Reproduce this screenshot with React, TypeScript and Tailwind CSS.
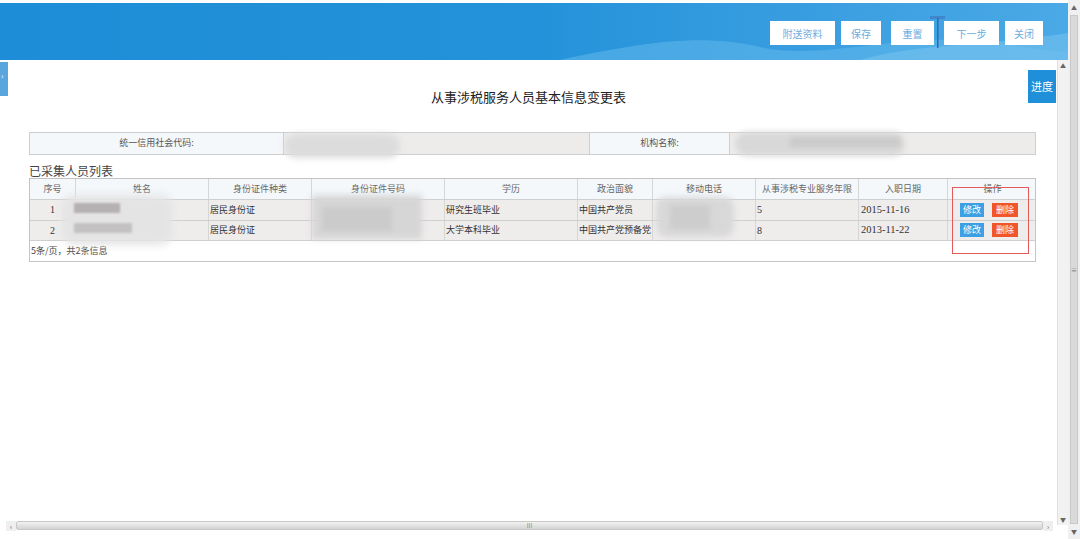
import React from "react";

const cols = "grid-cols-[46px_133px_103px_133px_133px_75px_103px_103px_89px_89px]";

const headers = ["序号", "姓名", "身份证件种类", "身份证件号码", "学历", "政治面貌", "移动电话", "从事涉税专业服务年限", "入职日期", "操作"];

const rows = [
  { no: "1", kind: "居民身份证", edu: "研究生班毕业", party: "中国共产党员", years: "5", date: "2015-11-16", h: "h-[21px]" },
  { no: "2", kind: "居民身份证", edu: "大学本科毕业", party: "中国共产党预备党", years: "8", date: "2013-11-22", h: "h-[20px]" },
];

const TopButton = ({ label, w }: { label: string; w: string }) => (
  <div className={`${w} h-[24px] bg-white flex items-center justify-center text-[10px] text-[#6aaee2]`}>{label}</div>
);

const App = () => {
  return (
    <div
      className="w-[1080px] h-[539px] bg-white flex overflow-hidden text-[#333]"
      style={{ fontFamily: '"Noto Sans CJK SC", "Liberation Sans", sans-serif' }}
    >
      {/* page */}
      <div className="w-[1068px] flex flex-col">
        {/* header */}
        <div className="mt-[3px] h-[57px] relative bg-gradient-to-r from-[#1d8dd7] via-[#2392da] to-[#4aa9e6] overflow-hidden">
          <svg className="absolute inset-0" width="1068" height="57" viewBox="0 0 1068 57">
            <path d="M560 57 C 640 40, 700 30, 760 44 C 820 58, 900 30, 980 38 C 1020 42, 1050 50, 1068 48 L1068 57 Z" fill="#5db6ea" opacity="0.6" />
            <path d="M860 57 C 920 40, 980 44, 1068 30 L1068 57 Z" fill="#7cc6ef" opacity="0.5" />
            <rect x="930" y="13" width="15" height="3" fill="#3f86cc" />
            <rect x="937" y="15" width="1.5" height="30" fill="#2b6db3" />
          </svg>
          <div className="relative flex justify-end items-center h-full pr-[25px] pt-[3px]">
            <TopButton label="附送资料" w="w-[65px]" />
            <div className="w-[6px]" />
            <TopButton label="保存" w="w-[40px]" />
            <div className="w-[10px]" />
            <TopButton label="重置" w="w-[43px]" />
            <div className="w-[10px]" />
            <TopButton label="下一步" w="w-[55px]" />
            <div className="w-[6px]" />
            <TopButton label="关闭" w="w-[38px]" />
          </div>
        </div>

        {/* frame */}
        <div className="flex-1 flex">
          <div className="flex-1 flex flex-col">
            <div className="flex-1 relative">
              {/* left tab */}
              <div className="absolute left-0 top-[2px] w-[8px] h-[34px] bg-[#5aa5dd] text-white text-[8px] leading-none pt-[10px] pl-[1px]">›</div>
              {/* progress */}
              <div className="absolute right-[1px] top-[10px] w-[28px] h-[33px] bg-[#1e8fd8] text-white text-[11px] flex items-center justify-center">进度</div>

              <div className="pt-[27px] text-center text-[13px] text-[#222]">从事涉税服务人员基本信息变更表</div>

              {/* info row */}
              <div className="relative ml-[29px] mt-[25px] w-[1007px] h-[23px] flex border border-[#cfcfcf] text-[9px] text-[#555]">
                <div className="w-[254px] bg-[#f5f8fb] flex items-center justify-center border-r border-[#cfcfcf]">统一信用社会代码:</div>
                <div className="w-[306px] bg-[#eeeceb] border-r border-[#cfcfcf]" />
                <div className="w-[140px] bg-[#f5f8fb] flex items-center justify-center border-r border-[#cfcfcf]">机构名称:</div>
                <div className="flex-1 bg-[#eeeceb]" />
                <div className="absolute left-[254px] top-[1px] w-[116px] h-[24px] bg-[#dcdcdc] blur-[3px] rounded-full" />
                <div className="absolute left-[705px] top-[-1px] w-[170px] h-[24px] bg-[#d8d8d8] blur-[3px] rounded-full" />
                <div className="absolute left-[760px] top-[4px] w-[110px] h-[10px] bg-[#cbcbcb] blur-[2px]" />
              </div>

              <div className="ml-[29px] mt-[8px] text-[12px] leading-[15px] font-normal text-[#444]">已采集人员列表</div>

              {/* table */}
              <div className="relative ml-[29px] w-[1007px] border border-[#c4c4c4] text-[9px]">
                <div className={`grid ${cols} h-[20px] bg-[#f4f8fb] text-[#666]`}>
                  {headers.map((h, i) => (
                    <div key={h} className={`flex items-center justify-center ${i < 9 ? "border-r border-[#d6d6d6]" : ""}`}>{h}</div>
                  ))}
                </div>
                {rows.map((r) => (
                  <div key={r.no} className={`grid ${cols} ${r.h} bg-[#efecec] border-t border-[#cfcfcf] text-[#333]`}>
                    <div className="flex items-center justify-center border-r border-[#d6d6d6] text-[10px]" style={{ fontFamily: '"Liberation Serif", serif' }}>{r.no}</div>
                    <div className="border-r border-[#d6d6d6]" />
                    <div className="flex items-center pl-[1px] border-r border-[#d6d6d6]">{r.kind}</div>
                    <div className="border-r border-[#d6d6d6]" />
                    <div className="flex items-center pl-[1px] border-r border-[#d6d6d6]">{r.edu}</div>
                    <div className="flex items-center pl-[1px] border-r border-[#d6d6d6] whitespace-nowrap overflow-hidden">{r.party}</div>
                    <div className="border-r border-[#d6d6d6]" />
                    <div className="flex items-center pl-[1px] border-r border-[#d6d6d6] text-[10px]" style={{ fontFamily: '"Liberation Serif", serif' }}>{r.years}</div>
                    <div className="flex items-center pl-[2px] border-r border-[#d6d6d6] text-[10.5px] text-[#333]" style={{ fontFamily: '"Liberation Serif", serif' }}>{r.date}</div>
                    <div className="flex items-center gap-[2px] pl-[12px]">
                      <span className="w-[24px] h-[14px] bg-[#3d9fe4] text-white flex items-center justify-center">修改</span>
                      <span className="w-[26px] h-[14px] bg-[#f1562a] text-white flex items-center justify-center ml-[6px]">删除</span>
                    </div>
                  </div>
                ))}
                <div className="h-[21px] border-t border-[#cfcfcf] bg-white flex items-center pl-[1px] text-[9px] text-[#444]">5条/页，共2条信息</div>

                {/* blurred personal data */}
                <div className="absolute left-[32px] top-[16px] w-[110px] h-[50px] bg-[#e4e4e4] blur-[4px] rounded-[12px]" />
                <div className="absolute left-[44px] top-[24px] w-[46px] h-[10px] bg-[#b5b0b2] blur-[1px]" />
                <div className="absolute left-[44px] top-[44px] w-[58px] h-[10px] bg-[#c4c1c2] blur-[1px]" />
                <div className="absolute left-[282px] top-[16px] w-[110px] h-[44px] bg-[#d6d6d6] blur-[3px]" />
                <div className="absolute left-[292px] top-[28px] w-[70px] h-[24px] bg-[#cbcbcb] blur-[2px]" />
                <div className="absolute left-[626px] top-[18px] w-[78px] h-[40px] bg-[#d8d8d8] blur-[3px] rounded-[10px]" />
                <div className="absolute left-[640px] top-[26px] w-[40px] h-[24px] bg-[#cdcdcd] blur-[2px]" />

                {/* red highlight */}
                <div className="absolute left-[923px] top-[9px] w-[75px] h-[65px] ring-1 ring-[#e25a5a]" />
              </div>
            </div>

            {/* horizontal scrollbar */}
            <div className="h-[23px] flex items-start pt-[5px] pl-[6px] pr-[4px]">
              <div className="w-[10px] h-[10px] bg-[#efefef] text-[7px] leading-[10px] text-center text-[#555]">‹</div>
              <div className="flex-1 h-[9px] rounded-[2px] border border-[#c7c7c7] bg-gradient-to-b from-[#f2f2f2] to-[#d3d3d3] flex items-center justify-center text-[6px] text-[#888]">III</div>
              <div className="w-[10px] h-[10px] bg-[#efefef] text-[7px] leading-[10px] text-center text-[#555]">›</div>
            </div>
          </div>
          {/* inner vertical scrollbar */}
          <div className="w-[11px] mb-[14px] bg-[#f2f2f2] border-l border-[#e0e0e0] flex flex-col items-center justify-between text-[6px] text-[#666] py-[1px]">
            <span>▲</span>
            <span>▼</span>
          </div>
        </div>
      </div>

      {/* outer vertical scrollbar */}
      <div className="w-[12px] bg-[#f0f0f0] flex flex-col items-center text-[6px] text-[#666]">
        <span className="mt-[3px]">▲</span>
        <div className="flex-1 w-[8px] my-[3px] bg-[#dadada] border border-[#c8c8c8] flex items-center justify-center text-[6px]">≡</div>
        <span className="mb-[3px]">▼</span>
      </div>
    </div>
  );
};

export default App;
